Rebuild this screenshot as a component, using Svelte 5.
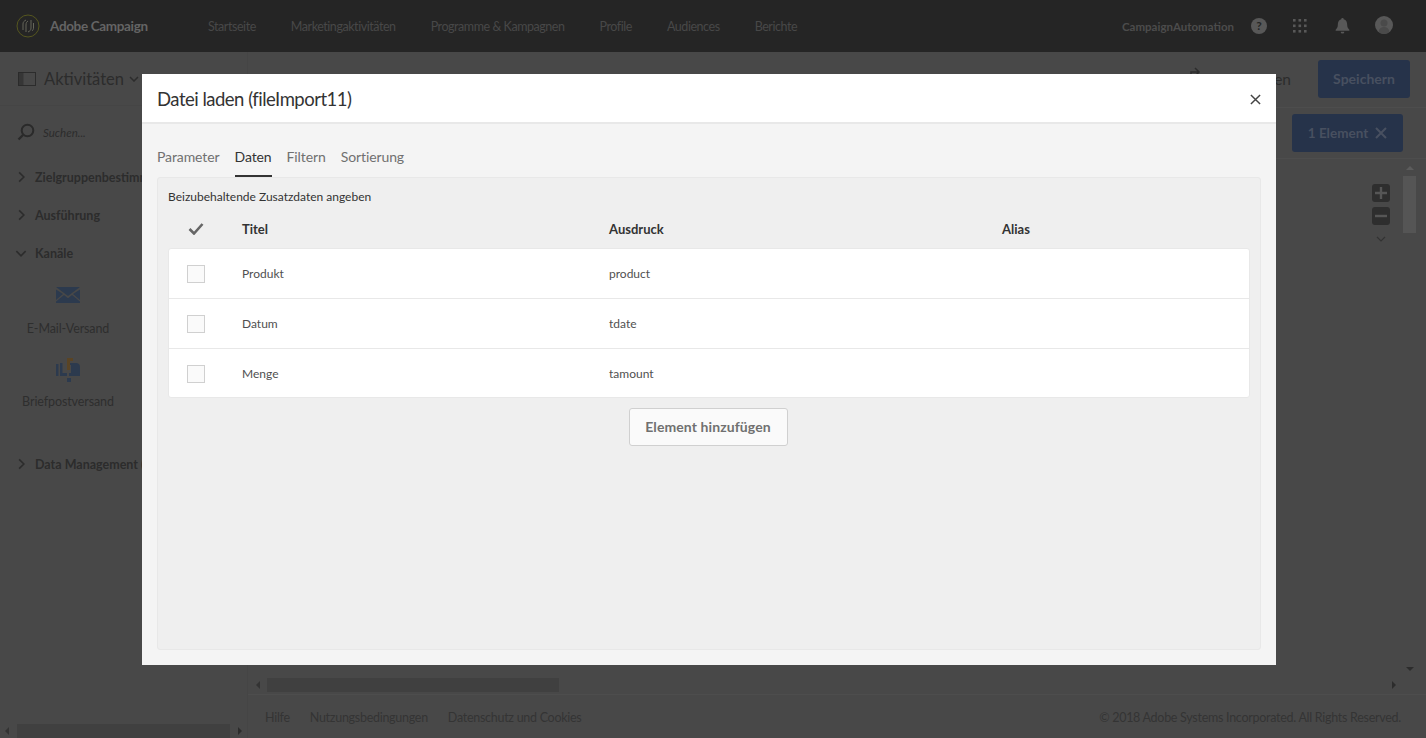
<script lang="ts">
  const navItems = ['Startseite', 'Marketingaktivitäten', 'Programme & Kampagnen', 'Profile', 'Audiences', 'Berichte'];
  const tabs = ['Parameter', 'Daten', 'Filtern', 'Sortierung'];
  const rows = [
    { title: 'Produkt', expr: 'product' },
    { title: 'Datum', expr: 'tdate' },
    { title: 'Menge', expr: 'tamount' }
  ];
  const activeTab = 'Daten';
</script>

<div class="page">
  <header class="topbar">
    <div class="brand">
      <svg class="logo" viewBox="0 0 24 24" aria-hidden="true">
        <circle cx="12" cy="12" r="11" fill="none" stroke="#55561f" stroke-width="1"/>
        <path d="M7 16V10c0-2 1-3 3-4M10 18v-7c0-2 .5-3 2-4M15 6v8c0 2-1 3-3 4M17.500 9v5c0 1-.5 2-1.500 3" fill="none" stroke="#66665a" stroke-width="1"/>
      </svg>
      <span>Adobe Campaign</span>
    </div>
    <nav class="nav">
      {#each navItems as item}
        <span>{item}</span>
      {/each}
    </nav>
    <div class="top-right">
      <span class="account">CampaignAutomation</span>
      <span class="help">?</span>
      <svg class="apps" viewBox="0 0 16 16" aria-hidden="true">
        {#each [1, 6.500, 12] as y}
          {#each [1, 6.500, 12] as x}
            <rect {x} {y} width="2.600" height="2.600"/>
          {/each}
        {/each}
      </svg>
      <svg class="bell" viewBox="0 0 16 18" aria-hidden="true">
        <path d="M8 0.500a1.300 1.300 0 0 1 1.300 1.400C12 2.600 13 5 13 8c0 2.500 1 3.800 2.300 5v1H.7v-1C2 11.800 3 10.500 3 8c0-3 1-5.400 3.700-6.100A1.300 1.300 0 0 1 8 .5zM6 15h4a2 2 0 0 1-4 0z"/>
      </svg>
      <svg class="avatar" viewBox="0 0 18 18" aria-hidden="true">
        <circle cx="9" cy="9" r="9" fill="#585858"/>
        <circle cx="9" cy="7" r="3.500" fill="#4a4a4a"/>
        <path d="M3.500 16c.5-3.500 2.500-5 5.500-5s5 1.500 5.500 5a9 9 0 0 1-11 0z" fill="#4a4a4a"/>
      </svg>
    </div>
  </header>

  <div class="workspace">
    <aside class="sidebar">
      <div class="side-head">
        <svg class="panel-icon" viewBox="0 0 18 14" aria-hidden="true">
          <rect x="0.500" y="0.500" width="17" height="13" fill="none" stroke="#2c2c2c"/>
          <rect x="0.500" y="0.500" width="5" height="13" fill="#2c2c2c" opacity="0.6"/>
        </svg>
        <span class="side-title">Aktivitäten</span>
        <svg class="caret" viewBox="0 0 10 6" aria-hidden="true"><path d="M1 1l4 4 4-4"/></svg>
      </div>
      <div class="search">
        <svg viewBox="0 0 18 18" aria-hidden="true">
          <circle cx="10.500" cy="7.500" r="5.800" fill="none" stroke="#2a2a2a" stroke-width="2"/>
          <path d="M6 12l-4.500 4.500" stroke="#2a2a2a" stroke-width="2.400" fill="none"/>
        </svg>
        <em>Suchen...</em>
      </div>
      <div class="group"><svg class="chev" viewBox="0 0 6 10" aria-hidden="true"><path d="M1 1l4 4-4 4"/></svg><span>Zielgruppenbestimmung</span></div>
      <div class="group"><svg class="chev" viewBox="0 0 6 10" aria-hidden="true"><path d="M1 1l4 4-4 4"/></svg><span>Ausführung</span></div>
      <div class="group"><svg class="chev open" viewBox="0 0 10 6" aria-hidden="true"><path d="M1 1l4 4 4-4"/></svg><span>Kanäle</span></div>
      <div class="activity">
        <svg class="mail" viewBox="0 0 24 16" aria-hidden="true">
          <path d="M0 0h24L12 9z"/><path d="M0 2.500V13l7-6zM24 2.500V13l-7-6zM0 16v-1.500l8-6.500 4 3.300L16 8l8 6.500V16z"/>
        </svg>
        <span>E-Mail-Versand</span>
      </div>
      <div class="activity post">
        <svg class="mailbox" viewBox="0 0 24 24" aria-hidden="true">
          <path d="M0 6h2.500v12H0zM4 5h2.500v10H11v3H4zM14 5h6c2.500 0 4 1.500 4 4v9H13v-3h2V7h-1zM11 20h4v4h-4z" fill="#2c3a4e"/>
          <path d="M11 0h6v3h-3v9h-3z" fill="#5a4424"/>
        </svg>
        <span>Briefpostversand</span>
      </div>
      <div class="group last"><svg class="chev" viewBox="0 0 6 10" aria-hidden="true"><path d="M1 1l4 4-4 4"/></svg><span>Data Management (Option)</span></div>
      <div class="side-scroll">
        <i class="arrow left"></i>
        <div class="track"><div class="thumb"></div></div>
        <i class="arrow right"></i>
      </div>
    </aside>

    <main class="main">
      <div class="toolbar">
        <svg class="undo" viewBox="0 0 14 14" aria-hidden="true"><path d="M7 1l4 4-4 4M11 5H3v7"/></svg>
        <span class="verlassen">Verlassen</span>
        <button class="primary save">Speichern</button>
      </div>
      <div class="selbar">
        <button class="primary sel">1 Element
          <svg viewBox="0 0 12 12" aria-hidden="true"><path d="M1 1l10 10M11 1L1 11"/></svg>
        </button>
      </div>
      <div class="canvas">
        <div class="zoom-tools">
          <span class="zoom-btn">
            <svg viewBox="0 0 18 18" aria-hidden="true"><path d="M9 3v12M3 9h12"/></svg>
          </span>
          <span class="zoom-btn">
            <svg viewBox="0 0 18 18" aria-hidden="true"><path d="M3 9h12"/></svg>
          </span>
          <svg class="zoom-more" viewBox="0 0 10 6" aria-hidden="true"><path d="M1 1l4 4 4-4"/></svg>
        </div>
        <div class="v-scroll">
          <i class="arrow up"></i>
          <div class="v-thumb"></div>
          <div class="v-space"></div>
          <i class="arrow down"></i>
        </div>
      </div>
      <div class="h-scroll">
        <i class="arrow left"></i>
        <div class="track"><div class="h-thumb"></div></div>
        <i class="arrow right"></i>
      </div>
      <footer class="footer">
        <span>Hilfe</span>
        <span>Nutzungsbedingungen</span>
        <span>Datenschutz und Cookies</span>
        <span class="copy">© 2018 Adobe Systems Incorporated. All Rights Reserved.</span>
      </footer>
    </main>
  </div>

  <div class="backdrop">
    <div class="dialog" role="dialog">
      <div class="dialog-head">
        <h2>Datei laden (fileImport11)</h2>
        <button class="close" aria-label="Schließen">
          <svg viewBox="0 0 12 12" aria-hidden="true"><path d="M1 1l10 10M11 1L1 11"/></svg>
        </button>
      </div>
      <div class="dialog-body">
        <div class="tabs">
          {#each tabs as tab}
            <span class="tab" class:active={tab === activeTab}>{tab}</span>
          {/each}
        </div>
        <section class="panel">
          <div class="panel-label">Beizubehaltende Zusatzdaten angeben</div>
          <div class="cols head">
            <span class="col-check">
              <svg viewBox="0 0 16 13" aria-hidden="true"><path d="M1.500 7l4.500 4.500L14.500 2"/></svg>
            </span>
            <span>Titel</span>
            <span>Ausdruck</span>
            <span>Alias</span>
          </div>
          <div class="list">
            {#each rows as row}
              <div class="cols row">
                <span class="col-check"><span class="box"></span></span>
                <span>{row.title}</span>
                <span>{row.expr}</span>
                <span></span>
              </div>
            {/each}
          </div>
          <div class="add-wrap">
            <button class="add">Element hinzufügen</button>
          </div>
        </section>
      </div>
    </div>
  </div>
</div>

<style>
  :global(body) {
    margin: 0;
    overflow: hidden;
    background: #484848;
  }

  .page {
    position: relative;
    width: 1426px;
    height: 738px;
    display: flex;
    flex-direction: column;
    overflow: hidden;
    font-family: Lato, "Liberation Sans", sans-serif;
    font-size: 12px;
    color: #2c2c2c;
    background: #484848;
  }

  .topbar {
    flex: 0 0 52px;
    display: flex;
    align-items: center;
    background: #252525;
    color: #484848;
  }

  .brand {
    display: flex;
    align-items: center;
    gap: 10px;
    width: 208px;
    padding-left: 16px;
    box-sizing: border-box;
    font-size: 13.500px;
    font-weight: 700;
    letter-spacing: -0.35px;
    color: #646464;
  }

  .logo {
    width: 24px;
    height: 24px;
    flex-shrink: 0;
  }

  .nav {
    display: flex;
    gap: 35px;
    font-size: 12.500px;
    letter-spacing: -0.45px;
  }

  .top-right {
    margin-left: auto;
    display: flex;
    align-items: center;
    padding-right: 33px;
    color: #4c4c4c;
  }

  .account {
    font-size: 11.500px;
    font-weight: 700;
    margin-right: 17px;
  }

  .help {
    width: 16px;
    height: 16px;
    border-radius: 50%;
    background: #585858;
    color: #252525;
    font-size: 12px;
    font-weight: 700;
    line-height: 16px;
    text-align: center;
    margin-right: 25px;
  }

  .apps {
    width: 16px;
    height: 16px;
    fill: #585858;
    margin-right: 27px;
  }

  .bell {
    width: 15px;
    height: 18px;
    fill: #585858;
    margin-right: 25px;
  }

  .avatar {
    width: 18px;
    height: 18px;
    margin-top: -3px;
  }

  .workspace {
    flex: 1;
    display: flex;
    min-height: 0;
  }

  .sidebar {
    width: 248px;
    flex-shrink: 0;
    display: flex;
    flex-direction: column;
    box-sizing: border-box;
    border-right: 1px solid #454545;
  }

  .side-head {
    display: flex;
    align-items: center;
    height: 54px;
    padding-left: 18px;
    box-sizing: border-box;
    border-bottom: 1px solid #454545;
  }

  .panel-icon {
    width: 18px;
    height: 14px;
    margin-right: 8px;
  }

  .side-title {
    font-size: 16.500px;
    color: #2c2c2c;
  }

  .caret {
    width: 10px;
    height: 6px;
    margin-left: 5px;
    fill: none;
    stroke: #2c2c2c;
    stroke-width: 1.500;
  }

  .search {
    display: flex;
    align-items: center;
    gap: 8px;
    height: 52px;
    padding-left: 17px;
    font-size: 11.500px;
    color: #2c2c2c;
  }

  .search svg {
    width: 18px;
    height: 18px;
  }

  .group {
    display: flex;
    align-items: center;
    height: 38px;
    padding-left: 18px;
    font-size: 12.500px;
    font-weight: 700;
    color: #2c2c2c;
    white-space: nowrap;
    overflow: hidden;
  }

  .group span {
    margin-left: 10px;
  }

  .chev {
    width: 7px;
    height: 12px;
    flex-shrink: 0;
    fill: none;
    stroke: #2c2c2c;
    stroke-width: 1.400;
  }

  .chev.open {
    width: 12px;
    height: 7px;
    margin-left: -3px;
    margin-right: -2px;
  }

  .activity {
    display: flex;
    flex-direction: column;
    align-items: center;
    width: 136px;
    font-size: 12.500px;
    letter-spacing: -0.1px;
    color: #2e2e2e;
  }

  .mail {
    width: 24px;
    height: 16px;
    fill: #2c3a4e;
    margin-top: 15px;
    margin-bottom: 18px;
  }

  .activity.post {
    margin-top: 22px;
  }

  .mailbox {
    width: 24px;
    height: 24px;
    margin-bottom: 12px;
  }

  .group.last {
    margin-top: 36px;
  }

  .side-scroll {
    margin-top: auto;
    height: 14px;
    display: flex;
    align-items: center;
  }

  .side-scroll .arrow.left {
    margin-left: 5px;
    margin-right: 8px;
  }

  .side-scroll .track {
    flex: 1;
    height: 14px;
  }

  .side-scroll .thumb {
    width: 213px;
    height: 14px;
    background: #404040;
  }

  .side-scroll .arrow.right {
    margin: 0 5px 0 0;
  }

  .arrow {
    display: block;
    width: 0;
    height: 0;
    flex-shrink: 0;
    border: 4px solid transparent;
  }

  .arrow.left {
    border-left-width: 0;
    border-right-color: #333;
  }

  .arrow.right {
    border-right-width: 0;
    border-left-color: #2c2c2c;
  }

  .arrow.up {
    border-top-width: 0;
    border-bottom-color: #5c5c5c;
  }

  .arrow.down {
    border-bottom-width: 0;
    border-top-color: #2c2c2c;
  }

  .main {
    flex: 1;
    min-width: 0;
    display: flex;
    flex-direction: column;
  }

  .toolbar {
    flex: 0 0 55px;
    display: flex;
    align-items: center;
    justify-content: flex-end;
    padding-right: 16px;
    padding-bottom: 1px;
    box-sizing: border-box;
  }

  .undo {
    width: 14px;
    height: 14px;
    fill: none;
    stroke: #2c2c2c;
    stroke-width: 1.500;
    margin-right: 24px;
    margin-top: -10px;
  }

  .verlassen {
    font-size: 15.500px;
    color: #2c2c2c;
    margin-right: 27px;
  }

  .primary {
    border: 0;
    border-radius: 3px;
    background: #26334a;
    color: #485060;
    font-family: inherit;
    font-weight: 700;
    font-size: 14px;
    height: 38px;
    padding: 0 0 2px;
  }

  .save {
    width: 92px;
  }

  .selbar {
    flex: 0 0 52px;
    display: flex;
    align-items: center;
    justify-content: flex-end;
    padding-right: 23px;
    border-top: 1px solid #4d4d4d;
    border-bottom: 1px solid #4d4d4d;
    box-sizing: border-box;
  }

  .sel {
    width: 111px;
    display: flex;
    align-items: center;
    justify-content: center;
    gap: 7px;
    font-size: 13.500px;
    padding: 0;
  }

  .sel svg {
    width: 12px;
    height: 12px;
    fill: none;
    stroke: #485060;
    stroke-width: 2;
  }

  .canvas {
    flex: 1;
    min-height: 0;
    display: flex;
    justify-content: flex-end;
  }

  .zoom-tools {
    display: flex;
    flex-direction: column;
    align-items: center;
    gap: 5px;
    margin-top: 25px;
    margin-right: 3px;
  }

  .zoom-btn {
    width: 18px;
    height: 18px;
    border-radius: 3px;
    background: #2e2e2e;
    display: block;
  }

  .zoom-btn svg {
    display: block;
    width: 18px;
    height: 18px;
    fill: none;
    stroke: #565656;
    stroke-width: 2.400;
  }

  .zoom-more {
    width: 10px;
    height: 6px;
    margin-top: 6px;
    fill: none;
    stroke: #333;
    stroke-width: 1.200;
  }

  .v-scroll {
    width: 33px;
    box-sizing: border-box;
    display: flex;
    flex-direction: column;
    align-items: center;
    padding-top: 7px;
    padding-bottom: 7px;
  }

  .v-thumb {
    width: 13px;
    height: 57px;
    margin-top: 6px;
    background: #555;
  }

  .v-space {
    flex: 1;
  }

  .h-scroll {
    flex: 0 0 14px;
    display: flex;
    align-items: center;
    padding-left: 8px;
    padding-right: 30px;
    margin-bottom: 2px;
  }

  .h-scroll .track {
    flex: 1;
    margin-left: 7px;
    height: 14px;
  }

  .h-thumb {
    width: 292px;
    height: 14px;
    background: #404040;
  }

  .footer {
    flex: 0 0 44px;
    display: flex;
    align-items: center;
    gap: 20px;
    padding: 2px 25px 0 17px;
    box-sizing: border-box;
    border-top: 1px solid #4d4d4d;
    font-size: 12.500px;
    letter-spacing: -0.28px;
    color: #343434;
  }

  .copy {
    margin-left: auto;
  }

  .backdrop {
    position: absolute;
    inset: 0;
    display: flex;
    align-items: flex-start;
    padding: 74px 0 0 142px;
    box-sizing: border-box;
  }

  .dialog {
    width: 1134px;
    height: 591px;
    display: flex;
    flex-direction: column;
    background: #f4f4f4;
  }

  .dialog-head {
    flex: 0 0 48px;
    display: flex;
    align-items: center;
    justify-content: space-between;
    padding: 0 15px;
    background: #fff;
    border-bottom: 2px solid #e8e8e8;
  }

  .dialog-head h2 {
    margin: 2px 0 0;
    font-size: 18.500px;
    font-weight: 400;
    letter-spacing: -0.5px;
    color: #333;
  }

  .close {
    width: 14px;
    height: 14px;
    padding: 0;
    border: 0;
    background: none;
    margin-right: -1px;
    margin-top: 3px;
  }

  .close svg {
    display: block;
    width: 11px;
    height: 11px;
    margin: auto;
    fill: none;
    stroke: #444;
    stroke-width: 1.600;
  }

  .dialog-body {
    flex: 1;
    min-height: 0;
    display: flex;
    flex-direction: column;
    padding: 0 15px 15px;
  }

  .tabs {
    flex: 0 0 53px;
    display: flex;
    align-items: flex-end;
    gap: 15px;
    font-size: 14px;
    letter-spacing: -0.1px;
    color: #707070;
  }

  .tab {
    height: 30px;
    line-height: 20px;
    box-sizing: border-box;
  }

  .tab.active {
    color: #333;
    border-bottom: 2px solid #333;
  }

  .panel {
    flex: 1;
    min-height: 0;
    box-sizing: border-box;
    padding: 0 10px;
    background: #efefef;
    border: 1px solid #e8e8e8;
    border-radius: 3px;
  }

  .panel-label {
    height: 37px;
    line-height: 37px;
    font-size: 12px;
    color: #333;
  }

  .cols {
    display: grid;
    grid-template-columns: 73px 367px 393px 1fr;
    align-items: center;
  }

  .head {
    height: 33px;
    font-size: 13px;
    font-weight: 700;
    color: #333;
    margin-top: -3px;
    margin-bottom: 3px;
    padding-left: 1px;
  }

  .col-check {
    display: flex;
    justify-content: center;
    width: 54px;
  }

  .col-check svg {
    width: 16px;
    height: 13px;
    fill: none;
    stroke: #666;
    stroke-width: 2.600;
  }

  .list {
    background: #fff;
    border: 1px solid #e8e8e8;
    border-radius: 3px;
  }

  .row {
    height: 50px;
    font-size: 12px;
    color: #505050;
    border-bottom: 1px solid #e8e8e8;
    box-sizing: border-box;
  }

  .row:last-child {
    height: 48px;
    border-bottom: 0;
  }

  .row:last-child .box {
    margin-top: 2px;
  }

  .box {
    width: 16px;
    height: 16px;
    background: #fafafa;
    border: 1px solid #d0d0d0;
  }

  .add-wrap {
    display: flex;
    justify-content: center;
    margin-top: 10px;
    padding-right: 2px;
  }

  .add {
    width: 159px;
    height: 38px;
    padding: 0 0 2px;
    border: 1px solid #d0d0d0;
    border-radius: 3px;
    background: #fafafa;
    font-family: inherit;
    font-size: 14px;
    font-weight: 700;
    letter-spacing: 0.1px;
    color: #707070;
  }
</style>
